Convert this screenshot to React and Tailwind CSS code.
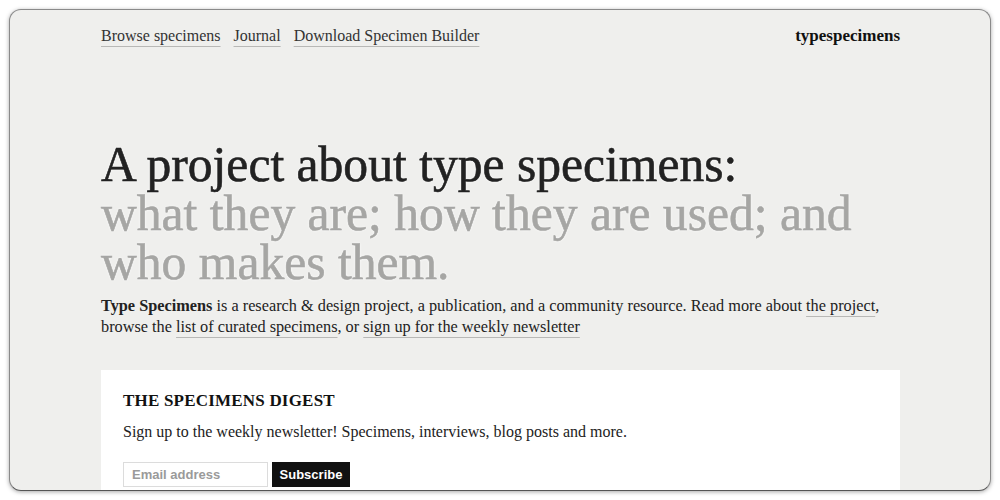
import React from 'react';

const serif = { fontFamily: '"Liberation Serif", "Times New Roman", serif' };
const sans = { fontFamily: '"Liberation Sans", Arial, sans-serif' };

const navLinks = ['Browse specimens', 'Journal', 'Download Specimen Builder'];

function Link({ children }) {
  return (
    <a
      href="#"
      className="underline decoration-[#b8b8b6] decoration-1 underline-offset-[5px]"
    >
      {children}
    </a>
  );
}

export default function App() {
  return (
    <div className="w-[1000px] h-[500px] bg-white p-[9px]" style={serif}>
      <div className="h-full rounded-[12px] border border-[#8a8a8a] border-b-[#555] bg-[#efefed] shadow-[0_1px_4px_rgba(0,0,0,0.35)] overflow-hidden text-[#222]">
        <div className="ml-[91px] w-[799px]">
          {/* nav */}
          <nav className="flex items-center justify-between pt-[14px] h-[38px]">
            <div className="flex gap-[13px] text-[16px] leading-6 text-[#333]">
              {navLinks.map((l) => (
                <Link key={l}>{l}</Link>
              ))}
            </div>
            <span className="text-[17px] font-bold leading-6 text-[#111]">typespecimens</span>
          </nav>

          {/* hero */}
          <h1 className="mt-[92px] text-[49.6px] leading-[49px] font-normal [-webkit-text-stroke:0.6px_currentColor] [text-shadow:0_0_3px_#fff]">
            <span className="text-[#222]">A project about type specimens:</span>
            <br />
            <span className="text-[#a6a6a4]">
              what they are; how they are used; and who makes them.
            </span>
          </h1>

          <p className="mt-2 text-[16.3px] leading-[21px] text-[#222]">
            <b>Type Specimens</b> is a research &amp; design project, a publication, and a
            community resource. Read more about <Link>the project</Link>, browse the{' '}
            <Link>list of curated specimens</Link>, or <Link>sign up for the weekly newsletter</Link>
          </p>

          {/* newsletter */}
          <div className="mt-[33px] bg-white px-[22px] pt-[18px] pb-6">
            <h2 className="text-[17px] font-bold leading-[25px] tracking-[0.2px] text-[#111]">
              THE SPECIMENS DIGEST
            </h2>
            <p className="mt-[7px] text-[16px] leading-6 text-[#222]">
              Sign up to the weekly newsletter! Specimens, interviews, blog posts and more.
            </p>
            <form className="mt-[18px] flex gap-1" onSubmit={(e) => e.preventDefault()}>
              <input
                type="email"
                placeholder="Email address"
                className="w-[145px] h-[25px] border border-[#dcdcdc] bg-white px-2 text-[13px] font-bold placeholder:text-[#9a9a9a] outline-none"
                style={sans}
              />
              <button
                className="w-[78px] h-[25px] bg-[#111] text-white text-[13px] font-bold"
                style={sans}
              >
                Subscribe
              </button>
            </form>
          </div>
        </div>
      </div>
    </div>
  );
}
